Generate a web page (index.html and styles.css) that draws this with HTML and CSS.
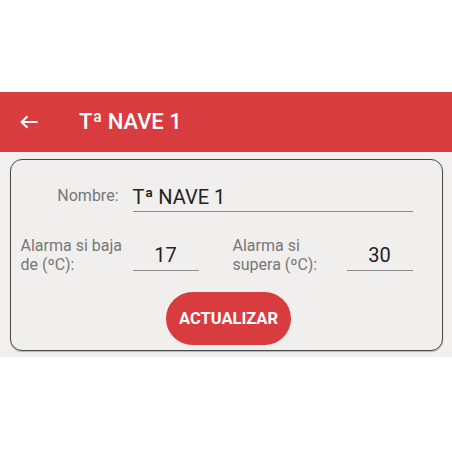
FILE: index.html
```html
<!DOCTYPE html>
<html lang="es">
<head>
<meta charset="utf-8">
<title>Tª NAVE 1</title>
<link rel="stylesheet" href="styles.css">
</head>
<body>
<div class="top-space"></div>
<header class="appbar">
  <svg class="back" width="18" height="14" viewBox="0 0 18 14" aria-hidden="true">
    <path d="M17.5 7H2 M7.5 1.2 L1.6 7 L7.5 12.8" fill="none" stroke="#fff" stroke-width="2.1"/>
  </svg>
  <h1 class="title">Tª NAVE 1</h1>
</header>
<main class="content">
  <section class="card">
    <div class="form">
      <label class="lbl lbl-name">Nombre:</label>
      <div class="field field-name">Tª NAVE 1</div>
      <label class="lbl lbl-low">Alarma si baja<br>de (ºC):</label>
      <div class="field field-num field-low">17</div>
      <label class="lbl lbl-high">Alarma si<br>supera (ºC):</label>
      <div class="field field-num field-high">30</div>
    </div>
    <div class="actions">
      <button class="btn">ACTUALIZAR</button>
    </div>
  </section>
</main>
</body>
</html>
```

FILE: styles.css
```css
* { box-sizing: border-box; }
html, body { margin: 0; padding: 0; background: #fff; }
body { font-family: Roboto, "Noto Sans", sans-serif; }

.top-space { height: 92px; }

.appbar {
  height: 60px;
  background: #d83c3f;
  display: flex;
  align-items: center;
  padding-left: 20px;
}
.back { display: block; flex: none; }
.title {
  margin: 0 0 0 41px;
  color: #fff;
  font-size: 22px;
  font-weight: 500;
  line-height: 26px;
}

.content {
  background: #f2f0ef;
  padding: 7px 9px 6px 10px;
}

.card {
  border: 1.5px solid #4a4a4a;
  border-radius: 12px;
  background: #f1efee;
  box-shadow: 0 1px 1px rgba(0,0,0,0.25);
  padding: 24.5px 29.5px 4.5px 9.5px;
}

.form {
  display: grid;
  grid-template-columns: 98px 66px 1fr 66px;
  grid-template-rows: 27px 38px;
  column-gap: 14px;
  row-gap: 24.7px;
}

.lbl {
  color: #777;
  font-size: 16px;
  line-height: 19px;
  white-space: nowrap;
}
.lbl-name {
  grid-column: 1;
  grid-row: 1;
  text-align: right;
  padding-top: 1.7px;
}
.lbl-low { grid-column: 1; grid-row: 2; }
.lbl-high { grid-column: 3; grid-row: 2; margin-left: 20px; }

.field {
  color: #222;
  font-size: 20px;
  line-height: 24px;
  padding-bottom: 2px;
  border-bottom: 1.5px solid #8c8c8c;
}
.field-name { grid-column: 2 / 5; grid-row: 1; }
.field-num {
  text-align: center;
  align-self: start;
  margin-top: 6.7px;
  padding-bottom: 3.5px;
}
.field-low { grid-column: 2; grid-row: 2; }
.field-high { grid-column: 4; grid-row: 2; }

.actions {
  display: flex;
  justify-content: center;
  margin-top: 18.3px;
  padding-left: 24px;
}
.btn {
  width: 125px;
  height: 53px;
  border: none;
  border-radius: 27px;
  background: #d83c3f;
  color: #fff;
  font-family: Roboto, "Noto Sans", sans-serif;
  font-size: 16.5px;
  font-weight: 700;
  padding: 0;
}
```
